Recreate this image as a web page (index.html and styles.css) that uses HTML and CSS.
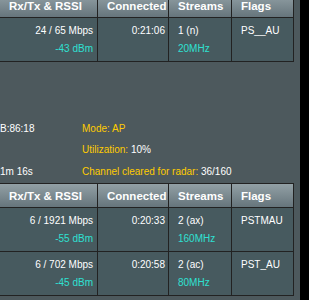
FILE: index.html
```html
<!DOCTYPE html>
<html lang="en">
<head>
    <meta charset="UTF-8">
    <meta name="viewport" content="width=device-width, initial-scale=1.0">
    <title>Wireless Log</title>
    <link rel="stylesheet" href="styles.css">
</head>
<body>

<div class="panel">
    <div class="clients top">
        <div class="th">Rx/Tx &amp; RSSI</div>
        <div class="th">Connected</div>
        <div class="th">Streams</div>
        <div class="th">Flags</div>

        <div class="td rate"><span>24 / 65 Mbps</span><span class="cyan">-43 dBm</span></div>
        <div class="td time"><span>0:21:06</span><span>&nbsp;</span></div>
        <div class="td"><span>1 (n)</span><span class="cyan">20MHz</span></div>
        <div class="td"><span>PS__AU</span><span>&nbsp;</span></div>
    </div>

    <div class="info">
        <div>B:86:18</div>
        <div class="label">Mode: AP</div>
        <div></div>
        <div><span class="label">Utilization:</span> 10%</div>
        <div>1m 16s</div>
        <div><span class="label">Channel cleared for radar:</span> 36/160</div>
    </div>

    <div class="clients bottom">
        <div class="th">Rx/Tx &amp; RSSI</div>
        <div class="th">Connected</div>
        <div class="th">Streams</div>
        <div class="th">Flags</div>

        <div class="td rate"><span>6 / 1921 Mbps</span><span class="cyan">-55 dBm</span></div>
        <div class="td time"><span>0:20:33</span><span>&nbsp;</span></div>
        <div class="td"><span>2 (ax)</span><span class="cyan">160MHz</span></div>
        <div class="td"><span>PSTMAU</span><span>&nbsp;</span></div>

        <div class="td rate"><span>6 / 702 Mbps</span><span class="cyan">-45 dBm</span></div>
        <div class="td time"><span>0:20:58</span><span>&nbsp;</span></div>
        <div class="td"><span>2 (ac)</span><span class="cyan">80MHz</span></div>
        <div class="td"><span>PST_AU</span><span>&nbsp;</span></div>
    </div>
</div>

</body>
</html>
```
FILE: styles.css
```css
body {
    margin: 0;
    background: #000;
    font-family: "Liberation Sans", Arial, sans-serif;
    font-size: 10px;
    color: #fff;
    overflow: hidden;
}
.panel {
    width: 300px;
    height: 300px;
    background: #4d595d;
    overflow: hidden;
}
.clients {
    display: grid;
    grid-template-columns: 97px 70px 62px 61px;
    gap: 1px;
    width: 294px;
    box-sizing: border-box;
    background: #222;
    border-top: 1px solid #222;
    border-bottom: 1px solid #222;
    border-right: 1px solid #222;
}
.top {
    margin-top: -7px;
    grid-template-rows: 23px 43px;
}
.bottom {
    grid-template-rows: 23px 43px 43px;
}
.th {
    background: linear-gradient(#92a0a5, #66757c);
    font-size: 11.5px;
    font-weight: bold;
    padding-left: 9px;
    display: flex;
    align-items: center;
}
.td {
    background: #475a5f;
    display: flex;
    flex-direction: column;
    justify-content: center;
    line-height: 18px;
    padding-left: 9px;
}
.td.rate {
    align-items: flex-end;
    padding: 0 4px 0 0;
}
.td.time {
    align-items: flex-end;
    padding: 0 3px 0 0;
}
.cyan {
    color: #2fe0d2;
}
.info {
    display: grid;
    grid-template-columns: 82px 1fr;
    grid-template-rows: 21px 21px 22px;
    align-items: center;
    margin: 56px 0 1px;
}
.label {
    color: #fc0;
}
```
